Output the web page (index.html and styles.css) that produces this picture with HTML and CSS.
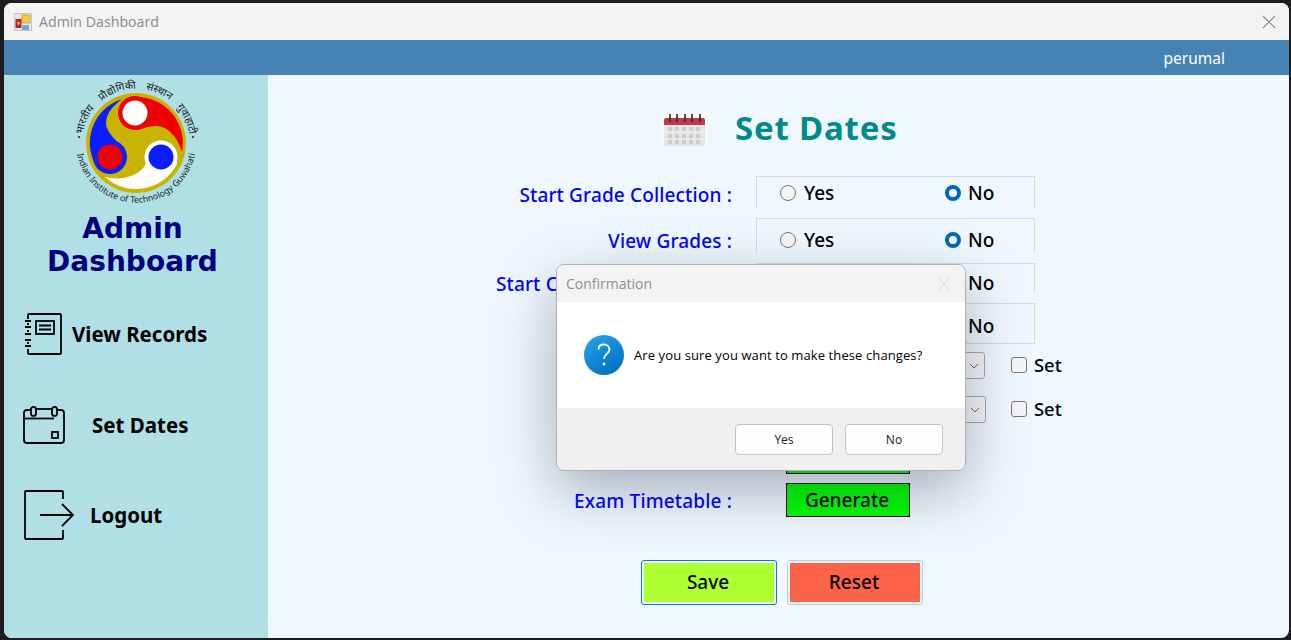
FILE: index.html
```html
<!DOCTYPE html>
<html lang="en">
<head>
    <meta charset="UTF-8">
    <meta name="viewport" content="width=device-width, initial-scale=1.0">
    <title>Admin Dashboard</title>
    <link rel="stylesheet" href="styles.css">
</head>
<body>
    <div class="window">
        <div class="titlebar">
            <svg class="app-icon" width="18" height="18" viewBox="0 0 18 18">
                <rect x="0.5" y="0.5" width="17" height="17" fill="#e6e6e6" stroke="#c6c6c6"/>
                <rect x="8" y="2" width="8" height="8" fill="#f5c842" stroke="#c79a1c" stroke-width="0.7"/>
                <rect x="1.5" y="6" width="6" height="9" fill="#b8281e"/>
                <rect x="3.5" y="9" width="2" height="2.5" fill="#f2d8d4"/>
                <rect x="8" y="12" width="7" height="5" fill="#6fa3ea"/>
            </svg>
            <span class="window-title">Admin Dashboard</span>
            <svg class="close-icon" width="14" height="14" viewBox="0 0 14 14">
                <path d="M1 1 L13 13 M13 1 L1 13" stroke="#8a8a8a" stroke-width="1.1" fill="none"/>
            </svg>
        </div>
        <div class="topbar">perumal</div>
        <div class="main">
            <aside class="sidebar">
                <svg class="logo" width="130" height="130" viewBox="-65 -65 130 130">
                    <defs>
                        <path id="arc-top" d="M -53.7 -6 A 54 54 0 0 1 53.7 -6"/>
                        <path id="arc-bottom" d="M -59.2 -10 A 60 60 0 1 0 59.2 -10"/>
                    </defs>
                    <circle r="50" fill="#c8b400"/>
                    <path fill="#f00000" d="M -1 -46 A 46 46 0 0 1 46 9 C 42 -5 32 -17 20 -17 C 10 -17 6 -13 -1 -13 Z"/>
                    <circle cx="-1" cy="-30" r="17" fill="#f00000"/>
                    <circle cx="-1" cy="-30" r="12.5" fill="#fff"/>
                    <path fill="#0a1eff" d="M -14 -44 A 46 46 0 0 0 -38 26 L -26 31 L -9 14 C -12 2 -30 -8 -30 -20 C -30 -30 -22 -38 -14 -44 Z"/>
                    <circle cx="-26" cy="14" r="17" fill="#0a1eff"/>
                    <circle cx="-26" cy="14" r="12.5" fill="#f00000"/>
                    <path fill="#fff" d="M -31 34 A 46 46 0 0 0 41 21 L 41 14 L 10 20 C 8 27 -2 33 -12 35 C -20 36 -26 35 -31 34 Z"/>
                    <circle cx="25" cy="14" r="16.5" fill="#fff"/>
                    <circle cx="25" cy="14" r="12.5" fill="#0a1eff"/>
                    <circle cx="-57" cy="-6" r="1" fill="#1a1a1a"/>
                    <circle cx="57" cy="-6" r="1" fill="#1a1a1a"/>
                    <text class="logo-text logo-hindi"><textPath href="#arc-top" startOffset="50%" text-anchor="middle">भारतीय प्रौद्योगिकी संस्थान गुवाहाटी</textPath></text>
                    <text class="logo-text"><textPath href="#arc-bottom" startOffset="50%" text-anchor="middle">Indian Institute of Technology Guwahati</textPath></text>
                </svg>
                <h1 class="side-heading">Admin<br>Dashboard</h1>
                <nav class="side-nav">
                    <a class="nav-item nav-records">
                        <svg width="38" height="42" viewBox="0 0 38 42" fill="none" stroke="#000" stroke-width="1.8">
                            <path d="M3 6 V2 Q3 1 4 1 H35 Q36 1 36 2 V40 Q36 41 35 41 H4 Q3 41 3 40 V36"/>
                            <path d="M3 10 V12 M3 17 V19 M3 24 V24 M3 29 V31"/>
                            <path d="M0 8 H6 M0 14 H6 M0 21 H6 M0 27 H6 M0 33 H6"/>
                            <rect x="11" y="8" width="18" height="13"/>
                            <path d="M14 12.5 H26 M14 16.5 H26"/>
                        </svg>
                        <span>View Records</span>
                    </a>
                    <a class="nav-item nav-dates">
                        <svg width="42" height="38" viewBox="0 0 42 38" fill="none" stroke="#000" stroke-width="1.8">
                            <path d="M8 4 H4 Q1 4 1 7 V34 Q1 37 4 37 H38 Q41 37 41 34 V7 Q41 4 38 4 H34"/>
                            <path d="M13 3 H29"/>
                            <path d="M1 12.5 H31"/>
                            <rect x="8" y="0.9" width="5" height="9" rx="2.5"/>
                            <rect x="29" y="0.9" width="5" height="9" rx="2.5"/>
                            <rect x="29" y="26" width="6" height="6"/>
                        </svg>
                        <span>Set Dates</span>
                    </a>
                    <a class="nav-item nav-logout">
                        <svg width="50" height="50" viewBox="0 0 50 50" fill="none" stroke="#000" stroke-width="1.8">
                            <path d="M39 9 V2 Q39 1 38 1 H2 Q1 1 1 2 V48 Q1 49 2 49 H38 Q39 49 39 48 V40"/>
                            <path d="M16 25 H49"/>
                            <path d="M38 14 L49 25 L38 36"/>
                        </svg>
                        <span>Logout</span>
                    </a>
                </nav>
            </aside>
            <section class="content">
                <div class="page-title">
                    <svg width="47" height="35" viewBox="0 0 47 35">
                        <rect width="47" height="35" fill="#f7f8f8"/>
                        <rect x="3" y="13" width="41" height="21" fill="#e5e6e7"/>
                        <path d="M3 13 V8 Q3 6 5 6 H42 Q44 6 44 8 V13 Z" fill="#c23a4a"/>
                        <path d="M9 2 V10 M16 2 V10 M24 2 V10 M31 2 V10 M39 2 V10" stroke="#33262a" stroke-width="1.6"/>
                        <g fill="#cbcccd">
                            <rect x="7" y="15" width="4" height="4"/><rect x="14" y="15" width="4" height="4"/><rect x="21" y="15" width="4" height="4"/><rect x="28" y="15" width="4" height="4"/><rect x="35" y="15" width="4" height="4"/>
                            <rect x="7" y="22" width="4" height="4"/><rect x="14" y="22" width="4" height="4"/><rect x="21" y="22" width="4" height="4"/><rect x="28" y="22" width="4" height="4"/><rect x="35" y="22" width="4" height="4"/>
                            <rect x="7" y="28" width="4" height="4"/><rect x="14" y="28" width="4" height="4"/><rect x="21" y="28" width="4" height="4"/><rect x="28" y="28" width="4" height="4"/><rect x="35" y="28" width="4" height="4"/>
                        </g>
                    </svg>
                    <h2>Set Dates</h2>
                </div>

                <div class="form">
                    <label class="field-label label-1">Start Grade Collection :</label>
                    <div class="radio-box box-1">
                        <label class="choice"><input type="radio" name="grade"> Yes</label>
                        <label class="choice"><input type="radio" name="grade" checked> No</label>
                    </div>

                    <label class="field-label label-2">View Grades :</label>
                    <div class="radio-box box-2">
                        <label class="choice"><input type="radio" name="view"> Yes</label>
                        <label class="choice"><input type="radio" name="view" checked> No</label>
                    </div>

                    <label class="field-label label-3">Start Course Evaluations :</label>
                    <div class="radio-box box-3">
                        <label class="choice"><input type="radio" name="feedback"> Yes</label>
                        <label class="choice"><input type="radio" name="feedback" checked> No</label>
                    </div>

                    <label class="field-label"></label>
                    <div class="radio-box box-4">
                        <label class="choice"><input type="radio" name="other"> Yes</label>
                        <label class="choice"><input type="radio" name="other" checked> No</label>
                    </div>

                    <label class="field-label"></label>
                    <div class="date-field">
                        <div class="combo">
                            <svg width="10" height="6" viewBox="0 0 10 6"><path d="M1 1 L5 5 L9 1" fill="none" stroke="#666" stroke-width="1"/></svg>
                        </div>
                        <label class="set-check"><input type="checkbox"> Set</label>
                    </div>

                    <label class="field-label"></label>
                    <div class="date-field">
                        <div class="combo combo-wide">
                            <svg width="10" height="6" viewBox="0 0 10 6"><path d="M1 1 L5 5 L9 1" fill="none" stroke="#666" stroke-width="1"/></svg>
                        </div>
                        <label class="set-check"><input type="checkbox"> Set</label>
                    </div>

                    <label class="field-label"></label>
                    <div class="gen-cell"><button class="gen-btn"></button></div>

                    <label class="field-label label-exam">Exam Timetable :</label>
                    <div class="gen-cell"><button class="gen-btn">Generate</button></div>
                </div>

                <div class="actions">
                    <button class="action-btn save-btn">Save</button>
                    <button class="action-btn reset-btn">Reset</button>
                </div>
            </section>
        </div>

        <div class="dialog">
            <div class="dialog-head">
                <span>Confirmation</span>
                <svg width="14" height="14" viewBox="0 0 14 14">
                    <path d="M1 1 L13 13 M13 1 L1 13" stroke="#e2e2e2" stroke-width="1.1" fill="none"/>
                </svg>
            </div>
            <div class="dialog-body">
                <svg class="question" width="40" height="40" viewBox="0 0 40 40">
                    <defs>
                        <linearGradient id="q-fill" x1="0.2" y1="0" x2="0.8" y2="1">
                            <stop offset="0" stop-color="#25a3e3"/>
                            <stop offset="1" stop-color="#006cc4"/>
                        </linearGradient>
                    </defs>
                    <circle cx="20" cy="20" r="20" fill="url(#q-fill)"/>
                    <path d="M14.5 14.5 C14.5 11 17 9.5 19.8 9.5 C23 9.5 25.5 11.5 25.5 14.5 C25.5 18.5 20 19 20 24" fill="none" stroke="#fff" stroke-width="1.8"/>
                    <circle cx="20" cy="29" r="1.4" fill="#fff"/>
                </svg>
                <p>Are you sure you want to make these changes?</p>
            </div>
            <div class="dialog-foot">
                <button class="dialog-btn">Yes</button>
                <button class="dialog-btn">No</button>
            </div>
        </div>
    </div>
</body>
</html>
```

FILE: styles.css
```css
html, body {
    margin: 0;
    height: 100%;
}
body {
    background-color: #1d1d1f;
    box-sizing: border-box;
    padding: 3px 2px 2px 4px;
    display: flex;
    overflow: hidden;
    font-family: "Noto Sans", sans-serif;
}
.window {
    flex: 1;
    position: relative;
    display: flex;
    flex-direction: column;
    border-radius: 8px;
    overflow: hidden;
    background-color: #f0f8ff;
}
.titlebar {
    height: 37px;
    flex: none;
    display: flex;
    align-items: center;
    background-color: #f3f3f3;
    padding: 0 13px 0 10px;
}
.app-icon {
    margin-right: 7px;
}
.window-title {
    font-family: "Open Sans", sans-serif;
    font-size: 14.2px;
    color: #8a8a8a;
}
.close-icon {
    margin-left: auto;
}
.topbar {
    height: 35px;
    flex: none;
    background-color: #4682b4;
    color: #fff;
    font-family: "Noto Sans", sans-serif;
    font-size: 15.5px;
    line-height: 36px;
    text-align: right;
    padding-right: 64px;
}
.main {
    flex: 1;
    display: flex;
    min-height: 0;
}

/* sidebar */
.sidebar {
    width: 264px;
    flex: none;
    background-color: #b0e0e6;
    display: flex;
    flex-direction: column;
    align-items: center;
    padding-top: 3px;
    box-sizing: border-box;
}
.logo {
    display: block;
}
.logo-text {
    font-family: "Noto Sans", "DejaVu Sans", sans-serif;
    font-size: 8.8px;
    fill: #1a1a1a;
}
.logo-hindi {
    font-size: 10.5px;
    word-spacing: 7px;
}
.side-heading {
    margin: 4px 0 0;
    padding-right: 7px;
    font-family: "DejaVu Sans", sans-serif;
    font-size: 28px;
    line-height: 33px;
    font-weight: bold;
    color: #000080;
    text-align: center;
}
.side-nav {
    align-self: stretch;
    margin-top: 11px;
    display: grid;
    grid-auto-rows: 90.5px;
}
.nav-item {
    display: flex;
    align-items: center;
    color: #000;
    font-family: "Noto Sans", sans-serif;
    font-size: 20.5px;
    font-weight: bold;
}
.nav-records {
    padding-left: 21px;
    gap: 9px;
}
.nav-dates {
    padding-left: 19px;
    gap: 27px;
}
.nav-logout {
    padding-left: 20px;
    gap: 16px;
}

/* main form */
.content {
    flex: 1;
    min-width: 0;
    padding-top: 37px;
    box-sizing: border-box;
}
.page-title {
    height: 35px;
    display: flex;
    align-items: center;
    padding-left: 393px;
    gap: 27px;
}
.page-title h2 {
    margin: 0 0 4px;
    font-family: "Noto Sans", sans-serif;
    font-size: 33px;
    letter-spacing: 0.8px;
    font-weight: bold;
    color: #008b8b;
}
.form {
    margin-top: 29px;
    display: grid;
    grid-template-columns: 464px 1fr;
    grid-template-rows: 42px 45px 40px 49px 44px 44px 43px 34px;
    column-gap: 24px;
}
.field-label {
    font-family: "Noto Sans", sans-serif;
    font-size: 19px;
    font-weight: 500;
    letter-spacing: 0.15px;
    color: #0000ff;
    text-align: right;
    line-height: 26px;
}
.label-1 { padding-top: 6px; }
.label-2 { padding-top: 10px; }
.label-3 { padding-top: 8px; }
.label-exam { padding-top: 5px; }
.radio-box {
    width: 279px;
    box-sizing: border-box;
    border: 1px solid #d8dadc;
    border-bottom: none;
    display: flex;
    font-size: 19px;
    font-weight: 500;
    color: #000;
}
.choice {
    display: flex;
    align-items: center;
    gap: 7px;
    height: 26px;
}
.choice:first-child {
    margin-left: 23px;
    width: 165px;
    gap: 8px;
}
.choice input {
    appearance: none;
    width: 16px;
    height: 16px;
    margin: 0;
    border-radius: 50%;
    border: 1px solid #777;
    background-color: #f5f5f5;
}
.choice input:checked {
    border: 4px solid #0067c0;
    background-color: #fff;
}
.box-1 { height: 32px; padding-top: 3px; }
.box-2 { height: 35px; padding-top: 8px; }
.box-3 { height: 30px; padding-top: 6px; }
.box-4 { height: 41px; padding-top: 9px; border-bottom: 1px solid #d8dadc; }
.date-field {
    display: flex;
    align-items: flex-start;
}
.combo {
    width: 199px;
    height: 27px;
    margin-left: 30px;
    box-sizing: border-box;
    border: 1px solid #a8a8a8;
    border-radius: 3px;
    background-color: #f8f8f8;
    display: flex;
    align-items: center;
    justify-content: flex-end;
    padding-right: 5px;
}
.combo-wide {
    width: 200px;
}
.set-check {
    display: flex;
    align-items: center;
    gap: 7px;
    height: 25px;
    margin-left: 26px;
    font-size: 18.4px;
    font-weight: 500;
    color: #000;
}
.combo-wide + .set-check {
    margin-left: 25px;
}
.set-check input {
    appearance: none;
    width: 16px;
    height: 16px;
    margin: 0;
    box-sizing: border-box;
    border: 1px solid #777;
    border-radius: 3px;
    background-color: #f5f5f5;
}
.gen-cell {
    padding-left: 30px;
}
.gen-btn {
    display: block;
    width: 124px;
    height: 34px;
    padding: 0 2px 0 0;
    border: 1px solid #000;
    background-color: #00ff00;
    color: #000;
    font-family: "Noto Sans", sans-serif;
    font-size: 19px;
    font-weight: 500;
}
.actions {
    margin-top: 43px;
    padding-left: 373px;
    display: flex;
    gap: 10px;
}
.action-btn {
    width: 136px;
    height: 45px;
    padding: 2px 4px 4px 2px;
    border: 1px solid #c8c8c8;
    border-radius: 3px;
    background: linear-gradient(#ff6347, #ff6347) center / 130px 39px no-repeat;
    color: #000;
    font-family: "Noto Sans", sans-serif;
    font-size: 19px;
    font-weight: 500;
}
.save-btn {
    border-color: #0078d4;
    background-image: linear-gradient(#adff2f, #adff2f);
}

/* confirmation dialog */
.dialog {
    position: absolute;
    left: 552px;
    top: 261px;
    width: 410px;
    height: 207px;
    box-sizing: border-box;
    display: flex;
    flex-direction: column;
    border: 1px solid #b0b0b0;
    border-radius: 8px;
    overflow: hidden;
    background-color: #f0f0f0;
    box-shadow: 0 20px 60px rgba(30, 40, 60, 0.36);
    font-family: "Open Sans", sans-serif;
}
.dialog-head {
    height: 37px;
    flex: none;
    display: flex;
    align-items: center;
    justify-content: space-between;
    padding: 0 14px 0 9px;
    background-color: #f3f3f3;
    color: #8f8f8f;
    font-size: 14px;
}
.dialog-body {
    height: 106px;
    flex: none;
    display: flex;
    align-items: center;
    gap: 10px;
    padding-left: 27px;
    box-sizing: border-box;
    background-color: #fff;
}
.dialog-body p {
    margin: 0;
    font-size: 13px;
    letter-spacing: 0.1px;
    color: #000;
}
.dialog-foot {
    flex: 1;
    display: flex;
    justify-content: flex-end;
    gap: 12px;
    padding: 16px 22px 0 0;
}
.dialog-btn {
    width: 98px;
    height: 31px;
    border: 1px solid #c4c4c4;
    border-radius: 4px;
    background-color: #fdfdfd;
    color: #1a1a1a;
    font-family: "Open Sans", sans-serif;
    font-size: 12px;
}
```
